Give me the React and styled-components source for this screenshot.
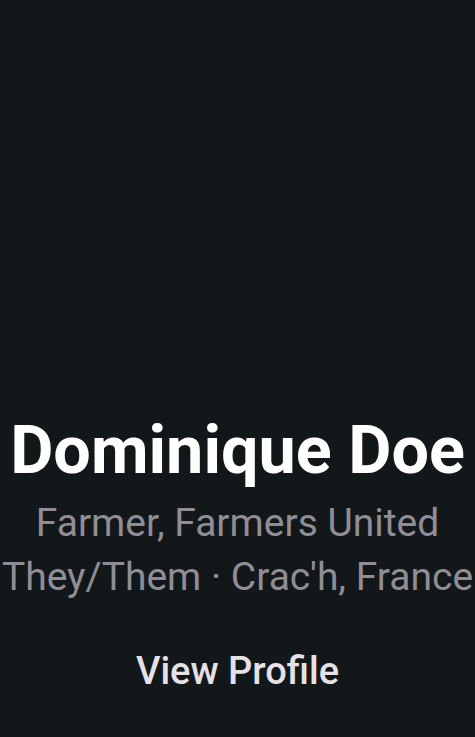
import React from "react";
import styled, { createGlobalStyle } from "styled-components";

const GlobalStyle = createGlobalStyle`
  html, body {
    margin: 0;
    padding: 0;
    background: #12171a;
  }
  #root {
    height: 100vh;
  }
`;

const Screen = styled.div`
  box-sizing: border-box;
  height: 100%;
  background: #12171a;
  display: flex;
  flex-direction: column;
  justify-content: flex-end;
  align-items: center;
  padding-bottom: 44px;
  font-family: Roboto, "Noto Sans", sans-serif;
  overflow: hidden;
`;

const Name = styled.h1`
  margin: 0 0 6px;
  font-size: 66.5px;
  font-weight: 700;
  line-height: 80px;
  color: #ffffff;
  white-space: nowrap;
`;

const Detail = styled.p`
  margin: 0;
  font-size: 39px;
  font-weight: 400;
  line-height: 54px;
  color: #918d96;
  white-space: nowrap;
`;

const ProfileButton = styled.button`
  margin-top: 45px;
  background: none;
  border: none;
  padding: 0;
  font-family: inherit;
  font-size: 38px;
  font-weight: 500;
  line-height: 44px;
  color: #e6e1e6;
  cursor: pointer;
`;

export default function App() {
  return (
    <>
      <GlobalStyle />
      <Screen>
        <Name>Dominique Doe</Name>
        <Detail>Farmer, Farmers United</Detail>
        <Detail>They/Them · Crac'h, France</Detail>
        <ProfileButton>View Profile</ProfileButton>
      </Screen>
    </>
  );
}
